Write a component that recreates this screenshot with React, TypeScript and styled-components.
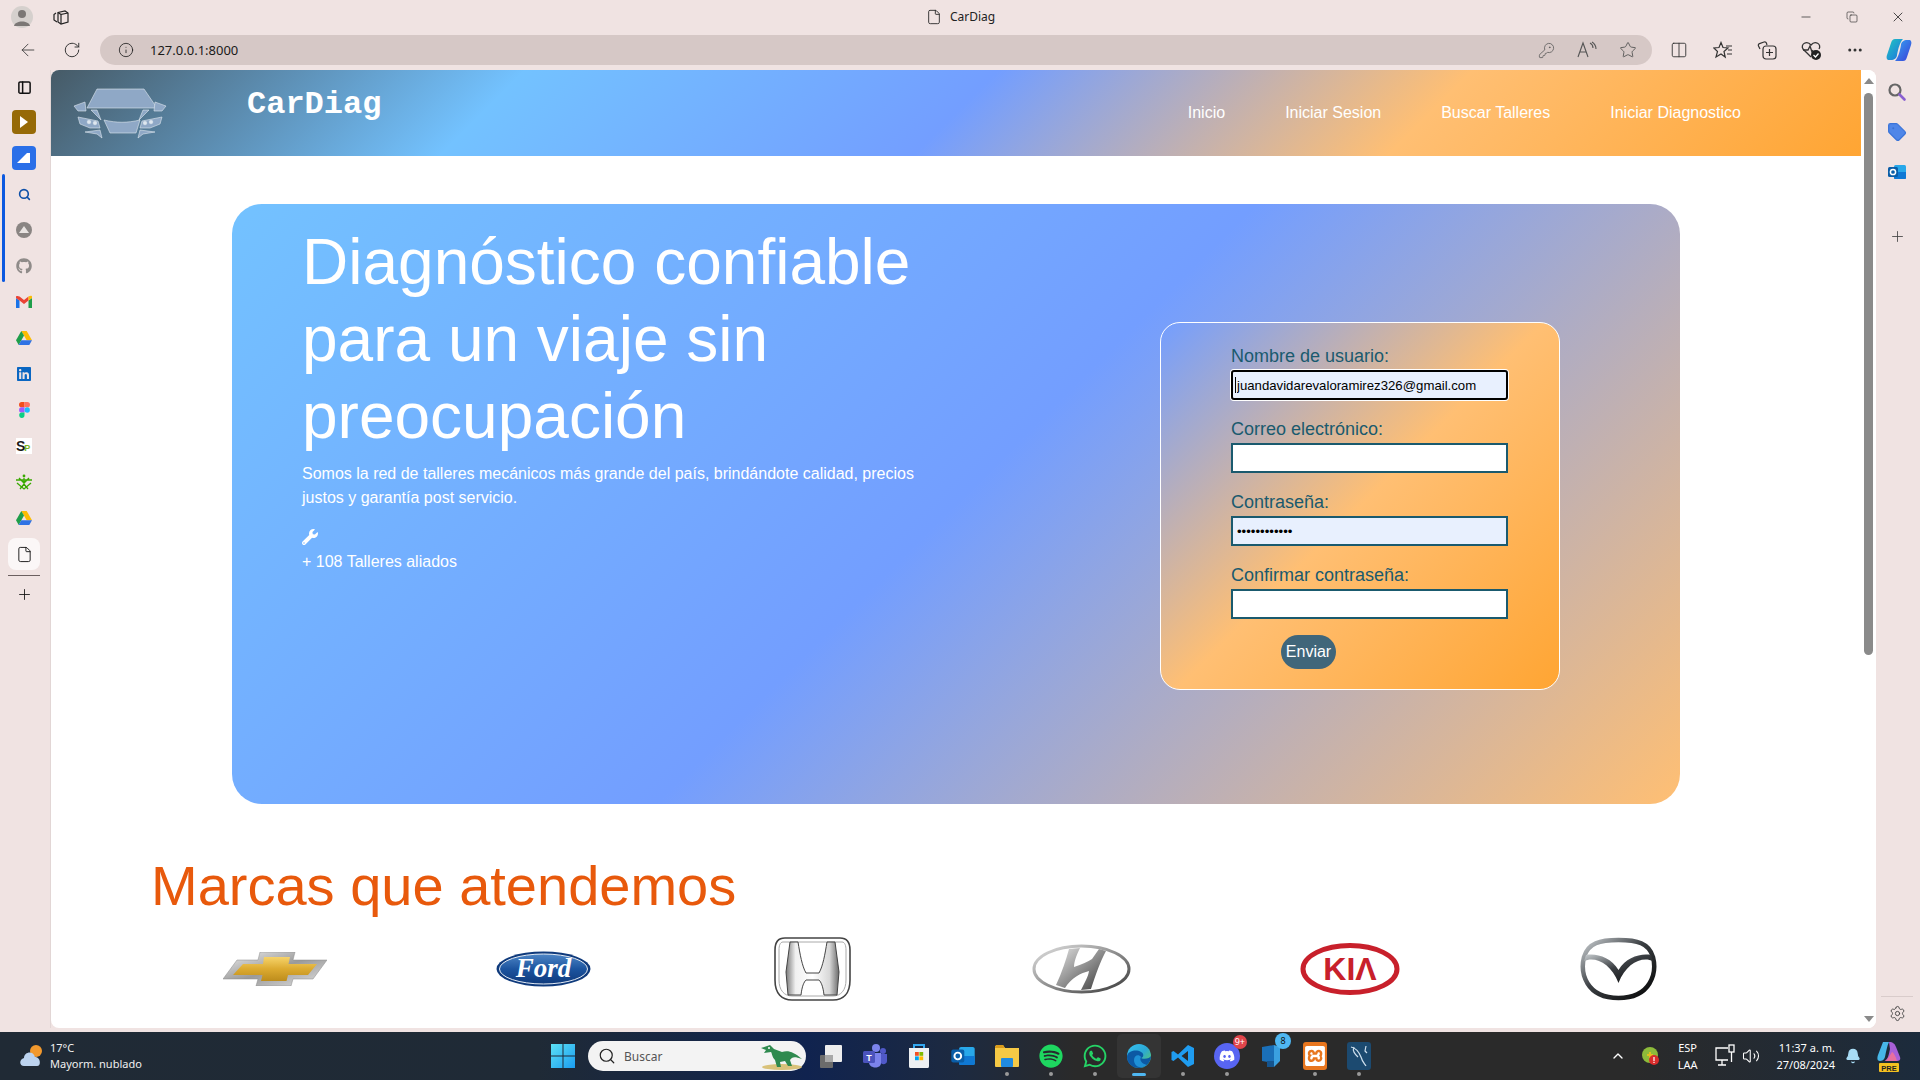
import styled, { createGlobalStyle } from 'styled-components';
import {
  ArrowLeft,
  RotateCw,
  Info,
  KeyRound,
  Star,
  Columns2,
  Copy,
  Minus,
  X,
  Plus,
  Ellipsis,
  Search,
  Settings,
  ChevronUp,
  Bell,
  Volume2,
  File,
  Tag,
  PanelLeft,
} from 'lucide-react';
import { FaWrench, FaGithub, FaSpotify, FaWhatsapp, FaDiscord, FaLinkedin } from 'react-icons/fa';
import { SiXampp } from 'react-icons/si';

const GlobalStyle = createGlobalStyle`
  html, body {
    margin: 0;
    height: 100%;
    overflow: hidden;
    background: #f0e3e2;
    font-family: 'Liberation Sans', Arial, sans-serif;
  }
  * { box-sizing: border-box; }
`;

const Screen = styled.div`
  width: 1920px;
  height: 1080px;
  display: grid;
  grid-template-rows: 33px 37px 962px 48px;
  overflow: hidden;
  background: #f0e3e2;
`;

/* browser chrome */
const TitleBar = styled.div`
  display: grid;
  grid-template-columns: 1fr auto 1fr;
  align-items: center;
  color: #222;
`;

const TitleLeft = styled.div`
  display: flex;
  align-items: center;
  gap: 19px;
  padding-left: 11px;
`;

const Avatar = styled.div`
  width: 22px;
  height: 22px;
  border-radius: 50%;
  background: #d5d0cd;
  display: flex;
  align-items: center;
  justify-content: center;
`;

const TabTitle = styled.div`
  display: flex;
  align-items: center;
  gap: 8px;
  font-family: 'Noto Sans', sans-serif;
  font-size: 12px;
  color: #222;
`;

const WindowButtons = styled.div`
  display: flex;
  justify-content: flex-end;
`;

const WindowButton = styled.div`
  width: 46px;
  height: 32px;
  display: flex;
  align-items: center;
  justify-content: center;
`;

const AddressRow = styled.div`
  display: flex;
  align-items: center;
  padding: 0 0 3px 10px;
`;

const NavIcon = styled.div`
  width: 36px;
  height: 32px;
  margin-right: 8px;
  display: flex;
  align-items: center;
  justify-content: center;
  color: #333;
`;

const AddressPill = styled.div`
  width: 1552px;
  height: 30px;
  margin-left: 2px;
  border-radius: 15px;
  background: #d6c8c6;
  display: flex;
  align-items: center;
  padding-left: 18px;
  gap: 16px;
  font-size: 13px;
  font-family: 'Noto Sans', sans-serif;
  color: #1a1a1a;
`;

const PillActions = styled.div`
  margin-left: auto;
  padding-right: 15px;
  display: flex;
  align-items: center;
  gap: 22px;
  color: #555;
`;

const Toolbar = styled.div`
  display: flex;
  align-items: center;
  margin-left: 5px;
`;

const ToolButton = styled.div`
  width: 44px;
  display: flex;
  align-items: center;
  justify-content: center;
  color: #333;
`;

const Middle = styled.div`
  display: grid;
  grid-template-columns: 51px 1825px 44px;
  padding-bottom: 4px;
  min-height: 0;
`;

const LeftRail = styled.div`
  display: flex;
  flex-direction: column;
  align-items: center;
  padding-right: 2px;
  border-right: 1px solid #e2d6d5;
`;

const RailSlot = styled.div<{ $h?: number; $selected?: boolean }>`
  width: ${(p) => (p.$selected ? '32px' : '48px')};
  height: ${(p) => (p.$selected ? '32px' : `${p.$h ?? 36}px`)};
  margin: ${(p) => (p.$selected ? '2px 0' : '0')};
  border-radius: 8px;
  background: ${(p) => (p.$selected ? '#fbf7f7' : 'transparent')};
  display: flex;
  align-items: center;
  justify-content: center;
  color: #111;
`;

const RailGroup = styled.div`
  position: relative;
  &::before {
    content: '';
    position: absolute;
    left: 2px;
    top: -2px;
    width: 3px;
    height: 108px;
    border-radius: 2px;
    background: #0c59e0;
  }
`;

const RailDivider = styled.div`
  width: 32px;
  height: 1px;
  margin: 3px 0;
  background: #6b5f5f;
`;

const AppTile = styled.div<{ $bg: string }>`
  width: 24px;
  height: 24px;
  border-radius: 4px;
  background: ${(p) => p.$bg};
  display: flex;
  align-items: center;
  justify-content: center;
`;

const SpBadge = styled.div`
  width: 16px;
  height: 16px;
  background: #fff;
  font-family: 'Liberation Sans', sans-serif;
  font-weight: 700;
  font-size: 14px;
  line-height: 16px;
  color: #1c1c1c;
  white-space: nowrap;
  letter-spacing: -1px;
  span {
    font-size: 9px;
    color: #7ab51d;
  }
`;

const Viewport = styled.div`
  display: flex;
  background: #fff;
  border-radius: 8px;
  overflow: hidden;
  min-height: 0;
`;

const Page = styled.div`
  width: 1810px;
  overflow: hidden;
`;

const Scrollbar = styled.div`
  width: 15px;
  position: relative;
  display: flex;
  flex-direction: column;
  align-items: center;
  padding-top: 8px;
  background: #fff;
`;

const ScrollArrow = styled.div<{ $down?: boolean }>`
  width: 0;
  height: 0;
  border-left: 5px solid transparent;
  border-right: 5px solid transparent;
  ${(p) => (p.$down ? 'border-top: 6px solid #8a8a8a; margin-top: auto; margin-bottom: 6px;' : 'border-bottom: 6px solid #8a8a8a;')}
`;

const ScrollThumb = styled.div`
  width: 9px;
  height: 562px;
  margin-top: 9px;
  border-radius: 5px;
  background: #8a8a8a;
`;

const RightRail = styled.div`
  display: flex;
  flex-direction: column;
  align-items: center;
  padding: 2px 2px 0 0;
  color: #444;
`;

const RightSlot = styled.div<{ $gap?: number }>`
  height: 40px;
  margin-top: ${(p) => p.$gap ?? 0}px;
  display: flex;
  align-items: center;
  justify-content: center;
`;

const RailFoot = styled.div`
  margin-top: auto;
  width: 32px;
  border-top: 1px solid #d9cccb;
  display: flex;
  justify-content: center;
  padding: 8px 0 6px;
`;

/* page header */
const Header = styled.header`
  height: 86px;
  display: flex;
  align-items: center;
  padding: 0 120px 0 21px;
  background: linear-gradient(135deg, #465a66 0%, #73c2ff 25%, #739eff 50%, #ffbf73 75%, #ffa533 100%);
`;

const Brand = styled.div`
  margin: 0 0 18px 79px;
  font-family: 'Liberation Mono', 'Courier New', monospace;
  font-weight: 700;
  font-size: 32px;
  color: #fff;
`;

const Nav = styled.nav`
  margin-left: auto;
  display: flex;
  gap: 60px;
`;

const NavLink = styled.a`
  font-size: 16px;
  color: #fff;
`;

/* hero */
const Hero = styled.section`
  width: 1448px;
  height: 600px;
  margin: 48px 0 0 181px;
  padding: 20px 120px 0 70px;
  border-radius: 30px;
  display: flex;
  justify-content: space-between;
  align-items: flex-start;
  color: #fff;
  background: linear-gradient(135deg, #73c2ff 0%, #739eff 50%, #ffbf73 100%);
`;

const HeroText = styled.div`
  width: 640px;
`;

const HeroTitle = styled.h1`
  margin: 0;
  font-weight: 400;
  font-size: 64px;
  line-height: 77px;
`;

const HeroCopy = styled.p`
  margin: 7px 0 0;
  font-size: 16px;
  line-height: 24px;
`;

const Stat = styled.div`
  margin-top: 19px;
  display: flex;
  flex-direction: column;
  gap: 5px;
  font-size: 16px;
  line-height: 24px;
`;

const FormCard = styled.form`
  width: 400px;
  height: 368px;
  margin-top: 98px;
  padding: 23px 0 0 70px;
  border: 1px solid #fff;
  border-radius: 20px;
  display: flex;
  flex-direction: column;
  gap: 19px;
  background: linear-gradient(135deg, #739eff 0%, #ffbf73 50%, #ffa533 100%);
`;

const Field = styled.div`
  position: relative;
  display: flex;
  flex-direction: column;
  gap: 3px;
`;

const FieldLabel = styled.label`
  height: 21px;
  font-size: 18px;
  line-height: 21px;
  color: #1a5a6e;
`;

const TextInput = styled.input<{ $filled?: boolean; $focused?: boolean }>`
  width: 277px;
  height: 30px;
  padding: 1px 4px;
  font-family: 'Liberation Sans', Arial, sans-serif;
  font-size: 13.2px;
  color: #000;
  background: ${(p) => (p.$filled ? '#e8f0fe' : '#fff')};
  border: 2px solid #1a5a6e;
  border-radius: 0;
  outline: none;
  ${(p) => p.$focused && 'border-color: #000; border-radius: 3px; box-shadow: 0 0 0 1px #fff;'}
`;

const Caret = styled.span`
  position: absolute;
  left: 4px;
  bottom: 7px;
  width: 1px;
  height: 16px;
  background: #000;
`;

const SendButton = styled.button`
  width: 55px;
  height: 34px;
  margin: -3px 0 0 50px;
  padding: 0;
  border: none;
  border-radius: 17px;
  background: #40667a;
  color: #fff;
  font-family: 'Liberation Sans', Arial, sans-serif;
  font-size: 16px;
`;

/* brands */
const BrandsTitle = styled.h2`
  margin: 50px 0 0 100px;
  font-weight: 400;
  font-size: 56px;
  line-height: 64px;
  color: #e8590c;
`;

const LogoRow = styled.div`
  display: grid;
  grid-template-columns: repeat(6, 268.6px);
  margin: 1px 0 0 90px;
  height: 100px;
`;

const LogoCell = styled.div`
  display: flex;
  align-items: center;
  justify-content: center;
`;

/* taskbar */
const Taskbar = styled.div`
  display: grid;
  grid-template-columns: 545px auto 1fr;
  align-items: center;
  color: #fff;
  font-family: 'Noto Sans', sans-serif;
  background: linear-gradient(90deg, #202a35 0%, #1f2a36 28%, #10234f 42%, #1d2a40 50%, #2a2a2a 56%, #2a2a2a 85%, #1c2b3c 100%);
`;

const Weather = styled.div`
  display: flex;
  align-items: center;
  gap: 4px;
  padding-left: 18px;
`;

const WeatherText = styled.div`
  font-size: 11px;
  line-height: 16px;
  color: #f0f0f0;
`;

const TaskApps = styled.div`
  display: flex;
  align-items: center;
`;

const StartButton = styled.div`
  width: 40px;
  padding-right: 4px;
  display: flex;
  justify-content: center;
`;

const SearchPill = styled.div`
  width: 218px;
  height: 30px;
  margin: 0 3px 0 3px;
  padding: 0 2px 0 10px;
  border-radius: 15px;
  background: #f3f3f3;
  display: flex;
  align-items: center;
  gap: 8px;
  font-size: 12px;
  color: #555;
`;

const Dino = styled.svg`
  margin-left: auto;
`;

const AppSlot = styled.div<{ $open?: boolean; $active?: boolean }>`
  position: relative;
  width: 44px;
  height: 44px;
  border-radius: 5px;
  display: flex;
  align-items: center;
  justify-content: center;
  background: ${(p) => (p.$active ? '#343434' : 'transparent')};
  &::after {
    content: '';
    display: ${(p) => (p.$open || p.$active ? 'block' : 'none')};
    position: absolute;
    left: 50%;
    bottom: 2px;
    width: ${(p) => (p.$active ? '14px' : '4px')};
    height: ${(p) => (p.$active ? '3px' : '4px')};
    border-radius: 2px;
    transform: translateX(-50%);
    background: ${(p) => (p.$active ? '#4fb7f2' : '#9a9a9a')};
  }
`;

const Badge = styled.span<{ $bg: string; $big?: boolean }>`
  position: absolute;
  top: ${(p) => (p.$big ? '-1px' : '1px')};
  right: 2px;
  min-width: ${(p) => (p.$big ? '16px' : '14px')};
  height: ${(p) => (p.$big ? '16px' : '14px')};
  padding: 0 2px;
  border-radius: 8px;
  background: ${(p) => p.$bg};
  color: ${(p) => (p.$big ? '#111' : '#fff')};
  font-size: 9px;
  line-height: ${(p) => (p.$big ? '16px' : '14px')};
  text-align: center;
`;

const Tray = styled.div`
  display: flex;
  align-items: center;
  justify-content: flex-end;
  padding-right: 19px;
`;

const TrayText = styled.div<{ $right?: boolean }>`
  font-size: 11px;
  line-height: 17px;
  text-align: ${(p) => (p.$right ? 'right' : 'center')};
  white-space: nowrap;
`;

const TrayGap = styled.div<{ $w: number }>`
  margin-left: ${(p) => p.$w}px;
  display: flex;
  align-items: center;
`;

/* drawings */
const CarLogo = () => (
  <svg width="96" height="52" viewBox="0 0 96 52" fill="#8fa8c6" stroke="#dfe7ef" strokeWidth="0.6">
    <path d="M25 2 L72 2 L85 21 L15 21 Z" />
    <path d="M2 19 L13 15 L14 24 L6 24 Z" />
    <path d="M94 19 L83 15 L82 24 L90 24 Z" />
    <path d="M19 23 L25 23 L29 33 Z" />
    <path d="M77 23 L71 23 L67 33 Z" />
    <path d="M6 30 L26 34 L28 41 L18 41 L8 37 Z" />
    <path d="M90 30 L70 34 L68 41 L78 41 L88 37 Z" />
    <path d="M32 33 C45 36 55 36 68 33 L64 46 L38 46 Z" />
    <path d="M13 45 L28 43 L30 51 L25 47 Z" />
    <path d="M83 45 L68 43 L66 51 L71 47 Z" />
    <circle cx="17" cy="35" r="1.8" fill="#dfe7ef" />
    <circle cx="23" cy="36" r="1.8" fill="#dfe7ef" />
    <circle cx="79" cy="35" r="1.8" fill="#dfe7ef" />
    <circle cx="73" cy="36" r="1.8" fill="#dfe7ef" />
  </svg>
);

const WorkspaceIcon = () => (
  <svg width="18" height="18" viewBox="0 0 18 18" fill="none" stroke="#222" strokeWidth="1.2">
    <path d="M6 4.5 L13 3 L16 5 V14 L9 16 L6 14 Z" />
    <path d="M4 5 L2 6.5 V12 L5 14" />
    <path d="M9 16 V6.5 L16 5 M9 6.5 L6 4.5" />
  </svg>
);

const FavoritesIcon = () => (
  <svg width="20" height="18" viewBox="0 0 20 18" fill="none" stroke="#333" strokeWidth="1.2">
    <path d="M8 1.5 L10 6.5 L15 7 L11 10.5 L12.2 16 L8 13 L3 16 L4.5 10.5 L0.8 7 L6 6.5 Z" />
    <path d="M13 5 H19 M15 9 H19 M14 13 H19" />
  </svg>
);

const CollectionsIcon = () => (
  <svg width="20" height="20" viewBox="0 0 20 20" fill="none" stroke="#333" strokeWidth="1.2">
    <path d="M3 9 L1.5 6 C1 5 1.5 4 2.5 3.6 L7 2 C8 1.7 9 2 9.4 3 L10 5" />
    <rect x="6" y="6" width="13" height="13" rx="3" />
    <path d="M12.5 9 V16 M9 12.5 H16" />
  </svg>
);

const HealthIcon = () => (
  <svg width="22" height="22" viewBox="0 0 22 22" fill="none" stroke="#333" strokeWidth="1.3">
    <path d="M11 18 L3 10 C0 5 7 1 11 6 C15 1 22 5 19 10" />
    <path d="M3 11 H8 L10 7 L12 13 L13 11" />
    <circle cx="16" cy="16" r="5" fill="#222" stroke="none" />
    <path d="M13.5 16 L15.5 18 L18.5 14.5" stroke="#fff" />
  </svg>
);

const CopilotIcon = ({ size = 26 }: { size?: number }) => (
  <svg width={size} height={size} viewBox="0 0 26 26">
    <defs>
      <linearGradient id="cpA" x1="0" y1="0" x2="1" y2="1">
        <stop offset="0" stopColor="#1fc8c0" />
        <stop offset="1" stopColor="#1f6fe0" />
      </linearGradient>
      <linearGradient id="cpB" x1="0" y1="0" x2="1" y2="1">
        <stop offset="0" stopColor="#35a6f2" />
        <stop offset="1" stopColor="#3a3ed8" />
      </linearGradient>
    </defs>
    <path d="M9 2 H17 C14 5 12 12 11 18 C11 21 8 23 5 23 H3 C1 23 0 21 1 18 L5 6 C6 3 7 2 9 2 Z" fill="url(#cpA)" />
    <path d="M17 24 H9 C12 21 14 14 15 8 C15 5 18 3 21 3 H23 C25 3 26 5 25 8 L21 20 C20 23 19 24 17 24 Z" fill="url(#cpB)" />
  </svg>
);

const GmailIcon = () => (
  <svg width="16" height="14" viewBox="0 0 16 14">
    <path d="M0 3 V13 H3.5 V5.5 Z" fill="#1a73e8" />
    <path d="M12.5 5.5 V13 H16 V3 Z" fill="#1e9e4a" />
    <path d="M0 1.5 V3 L3.5 5.5 L8 9 L12.5 5.5 V1.5 L8 5 L3.5 1.5 C2 0.5 0 1 0 1.5 Z" fill="#ea4335" />
    <path d="M12.5 1.5 V5.5 L16 3 V1.5 C16 0.5 14 0.5 12.5 1.5 Z" fill="#fbbc04" />
  </svg>
);

const DriveIcon = () => (
  <svg width="16" height="14" viewBox="0 0 16 14">
    <path d="M5.3 0 H10.7 L16 9.2 H10.7 Z" fill="#fbbc04" />
    <path d="M5.3 0 L0 9.2 L2.7 14 L8 4.6 Z" fill="#1e9e4a" />
    <path d="M5.3 9.2 H16 L13.3 14 H2.7 Z" fill="#2f72e4" />
  </svg>
);

const FigmaIcon = () => (
  <svg width="11" height="16" viewBox="0 0 11 16">
    <path d="M2.7 0 H5.5 V5.3 H2.7 A2.65 2.65 0 0 1 2.7 0 Z" fill="#f24e1e" />
    <path d="M5.5 0 H8.3 A2.65 2.65 0 0 1 8.3 5.3 H5.5 Z" fill="#ff7262" />
    <path d="M2.7 5.3 H5.5 V10.6 H2.7 A2.65 2.65 0 0 1 2.7 5.3 Z" fill="#a259ff" />
    <circle cx="8.2" cy="8" r="2.65" fill="#1abcfe" />
    <path d="M2.7 10.6 H5.5 V13.3 A2.65 2.65 0 1 1 2.7 10.6 Z" fill="#0acf83" />
  </svg>
);

const SenaIcon = () => (
  <svg width="16" height="16" viewBox="0 0 16 16" fill="none" stroke="#39a900" strokeWidth="1.3">
    <circle cx="8" cy="2" r="1.4" fill="#39a900" stroke="none" />
    <path d="M0 6 H16 M8 4 V9 M1 9 L8 15 L15 9 M4 15 L8 10 L12 15 M3 4 L8 9 L13 4" />
  </svg>
);

const EdgeSearchIcon = () => (
  <svg width="20" height="20" viewBox="0 0 20 20" fill="none">
    <circle cx="8" cy="8" r="5.5" stroke="#666" strokeWidth="2.2" />
    <path d="M12.5 12.5 L17.5 17.5" stroke="#8a5fd0" strokeWidth="2.6" strokeLinecap="round" />
  </svg>
);

const MsTagIcon = () => <Tag size={20} color="#3a74d9" fill="#4f86e8" strokeWidth={1.5} />;

const OutlookIcon = ({ size = 20 }: { size?: number }) => (
  <svg width={size} height={size} viewBox="0 0 20 20">
    <rect x="7" y="3" width="12" height="14" rx="1.5" fill="#28a8ea" />
    <path d="M7 10 L19 10 V16 C19 17 18 17 17 17 H8 C7 17 7 16 7 16 Z" fill="#0f78d4" />
    <rect x="1" y="5" width="10" height="10" rx="1.5" fill="#0a5ea8" />
    <circle cx="6" cy="10" r="2.6" fill="none" stroke="#fff" strokeWidth="1.5" />
  </svg>
);

const WeatherIcon = () => (
  <svg width="28" height="28" viewBox="0 0 28 28">
    <circle cx="18" cy="9" r="6" fill="#f2992e" />
    <path d="M6 24 C1 24 1 17 6 16 C6 10 15 8 17 15 C22 14 24 24 19 24 Z" fill="#bcd3ef" />
  </svg>
);

const WindowsLogo = () => (
  <svg width="24" height="24" viewBox="0 0 24 24">
    <defs>
      <linearGradient id="winG" x1="0" y1="0" x2="1" y2="1">
        <stop offset="0" stopColor="#5ce1f5" />
        <stop offset="1" stopColor="#1a9cf0" />
      </linearGradient>
    </defs>
    <path d="M0 0 H11.5 V11.5 H0 Z M12.5 0 H24 V11.5 H12.5 Z M0 12.5 H11.5 V24 H0 Z M12.5 12.5 H24 V24 H12.5 Z" fill="url(#winG)" />
  </svg>
);

const TaskViewIcon = () => (
  <svg width="24" height="24" viewBox="0 0 24 24">
    <rect x="1" y="11" width="13" height="13" rx="1" fill="#6b6b6b" />
    <rect x="6" y="1" width="17" height="17" rx="1" fill="#ededed" />
    <rect x="6" y="11" width="8" height="7" fill="#a8a8a8" />
  </svg>
);

const TeamsIcon = () => (
  <svg width="26" height="26" viewBox="0 0 26 26">
    <circle cx="14" cy="5" r="4" fill="#7b83eb" />
    <circle cx="21" cy="8" r="3" fill="#5059c9" />
    <path d="M17 11 H25 V18 C25 22 19 22 18 19 Z" fill="#5059c9" />
    <path d="M7 10 H19 V20 C19 26 8 26 7 20 Z" fill="#7b83eb" />
    <rect x="1" y="8" width="12" height="12" rx="1.5" fill="#4b53bc" />
    <text x="7" y="17.5" fontSize="9" fontWeight="700" fill="#fff" textAnchor="middle" fontFamily="Liberation Sans">T</text>
  </svg>
);

const StoreIcon = () => (
  <svg width="24" height="26" viewBox="0 0 24 26">
    <path d="M7 5 V2 H17 V5" fill="none" stroke="#33a8f0" strokeWidth="2" />
    <path d="M2 5 H22 V23 C22 25 21 25 20 25 H4 C3 25 2 25 2 23 Z" fill="#eef0f2" />
    <rect x="8" y="9" width="3.8" height="3.8" fill="#f25022" />
    <rect x="12.4" y="9" width="3.8" height="3.8" fill="#7fba00" />
    <rect x="8" y="13.4" width="3.8" height="3.8" fill="#00a4ef" />
    <rect x="12.4" y="13.4" width="3.8" height="3.8" fill="#ffb900" />
  </svg>
);

const ExplorerIcon = () => (
  <svg width="26" height="24" viewBox="0 0 26 24">
    <path d="M1 3 C1 2 2 1 3 1 H9 L11 4 H25 V22 C25 23 24 23 23 23 H3 C2 23 1 23 1 22 Z" fill="#f6c945" />
    <path d="M1 3 C1 2 2 1 3 1 H9 L11 4 H1 Z" fill="#d99b1c" />
    <rect x="7" y="14" width="12" height="9" rx="1" fill="#1f8ae0" />
  </svg>
);

const EdgeIcon = () => (
  <svg width="26" height="26" viewBox="0 0 26 26">
    <defs>
      <linearGradient id="edgeG" x1="0" y1="0" x2="1" y2="1">
        <stop offset="0" stopColor="#35c1f1" />
        <stop offset="0.5" stopColor="#2ba8d4" />
        <stop offset="1" stopColor="#66d24f" />
      </linearGradient>
    </defs>
    <circle cx="13" cy="13" r="12" fill="url(#edgeG)" />
    <path d="M1 14 C1 8 10 6 15 9 C19 11 17 15 15 15 C19 17 24 15 25 13 C25 21 18 25 13 25 C6 25 1 20 1 14 Z" fill="#0c59a4" />
    <path d="M8 17 C8 12 13 11 15 14 C13 17 16 21 21 22 C14 27 8 23 8 17 Z" fill="#1e90d6" />
  </svg>
);

const VsCodeIcon = () => (
  <svg width="24" height="24" viewBox="0 0 24 24">
    <path d="M17 1 L23 4 V20 L17 23 L7 13.5 L2.5 17 L0.5 16 V8 L2.5 7 L7 10.5 Z M17 7 L10.5 12 L17 17 Z" fill="#1f9cf0" />
  </svg>
);

const WordLikeIcon = () => (
  <svg width="26" height="26" viewBox="0 0 26 26">
    <path d="M4 4 L16 2 V20 L4 18 Z" fill="#1a6fb8" />
    <path d="M16 2 L22 4 V18 L16 24 Z" fill="#3aa0e0" />
    <rect x="9" y="18" width="7" height="6" fill="#15548e" />
  </svg>
);

const WorkbenchIcon = () => (
  <svg width="24" height="28" viewBox="0 0 24 28" fill="none" stroke="#cfe0ee" strokeWidth="1.2">
    <rect width="24" height="28" rx="3" fill="#1c4a70" stroke="none" />
    <path d="M4 5 C9 6 12 10 14 15 C15 19 17 21 19 24" />
    <path d="M7 5 C5 9 8 12 11 15" />
    <path d="M19 4 L18 9 L20 11" />
  </svg>
);

const NetworkIcon = () => (
  <svg width="22" height="24" viewBox="0 0 22 24" fill="none" stroke="#fff" strokeWidth="1.3">
    <path d="M14 4 H2 V16 H14" />
    <path d="M8 16 V21 M4 21 H12" />
    <rect x="15" y="1" width="5" height="7" />
    <path d="M17.5 8 V18" />
  </svg>
);

const Tile = styled.div<{ $bg: string; $round?: boolean }>`
  width: 24px;
  height: 28px;
  border-radius: ${(p) => (p.$round ? '50%' : '3px')};
  background: ${(p) => p.$bg};
  display: flex;
  align-items: center;
  justify-content: center;
  color: #fff;
`;

const RoundTile = styled(Tile)`
  width: 26px;
  height: 26px;
`;

const DinoIcon = () => (
  <Dino width="46" height="28" viewBox="0 0 46 28">
    <ellipse cx="24" cy="25" rx="20" ry="3" fill="#d9c27a" />
    <path d="M3 6 L12 3 L16 7 L24 10 C30 8 36 10 44 17 C36 14 34 15 32 18 L34 24 H30 L27 19 L22 20 L23 25 H19 L17 18 C14 15 14 11 13 10 L6 11 L8 8 Z" fill="#2f8a4f" />
    <circle cx="11" cy="6" r="1" fill="#fff" />
  </Dino>
);

const TrayAppIcon = () => (
  <svg width="20" height="20" viewBox="0 0 20 20">
    <circle cx="10" cy="9" r="8" fill="#8dbb3a" />
    <path d="M7 9 H13 M10 6 V12" stroke="#e0c020" strokeWidth="2" />
    <circle cx="14" cy="14" r="5" fill="#d92c2c" />
    <rect x="13.4" y="11" width="1.2" height="4" fill="#fff" />
    <rect x="13.4" y="15.8" width="1.2" height="1.2" fill="#fff" />
  </svg>
);

const CopilotPreIcon = () => (
  <svg width="26" height="32" viewBox="0 0 26 32">
    <path d="M7 2 H13 C11 6 10 12 9 17 C8 20 6 21 4 21 C1 21 1 18 2 15 Z" fill="#47b7e8" />
    <path d="M13 2 C17 2 19 4 20 7 L24 17 C25 20 23 21 21 21 H9 C12 19 13 14 14 9 Z" fill="#a860d8" />
    <path d="M9 21 H21 C20 17 18 13 16 12 C14 15 12 19 9 21 Z" fill="#e86fa0" />
    <rect x="3" y="23" width="20" height="9" rx="1" fill="#f4c020" />
    <text x="13" y="30.5" fontSize="7.5" fontWeight="700" textAnchor="middle" fill="#222" fontFamily="Liberation Sans">PRE</text>
  </svg>
);

const ChevroletLogo = () => (
  <svg width="104" height="34" viewBox="0 0 104 34">
    <defs>
      <linearGradient id="chevS" x1="0" y1="0" x2="1" y2="1">
        <stop offset="0" stopColor="#f2f2f2" />
        <stop offset="0.5" stopColor="#9a9a9a" />
        <stop offset="1" stopColor="#e4e4e4" />
      </linearGradient>
      <linearGradient id="chevG" x1="0" y1="0" x2="0" y2="1">
        <stop offset="0" stopColor="#f6d36a" />
        <stop offset="0.5" stopColor="#dcaa30" />
        <stop offset="1" stopColor="#bd8c1c" />
      </linearGradient>
    </defs>
    <path d="M14 8 H35 L37 0 H72 L70 8 H104 L90 27 H70 L68 34 H33 L35 27 H0 Z" fill="url(#chevS)" stroke="#8a8a8a" strokeWidth="0.5" />
    <path d="M20 12 H40 L41 5 H67 L65.5 12 H94 L85 23 H65 L63.5 29 H38 L39.5 23 H10 Z" fill="url(#chevG)" />
  </svg>
);

const FordLogo = () => (
  <svg width="95" height="36" viewBox="0 0 95 36">
    <defs>
      <linearGradient id="fordB" x1="0" y1="0" x2="0" y2="1">
        <stop offset="0" stopColor="#4e86c6" />
        <stop offset="0.5" stopColor="#1c549f" />
        <stop offset="1" stopColor="#0f3a7c" />
      </linearGradient>
    </defs>
    <ellipse cx="47.5" cy="18" rx="47" ry="17.5" fill="#0f3a7c" />
    <ellipse cx="47.5" cy="18" rx="44" ry="15" fill="url(#fordB)" stroke="#e7eef6" strokeWidth="1" />
    <text x="47.5" y="26" textAnchor="middle" fontFamily="Liberation Serif" fontStyle="italic" fontWeight="700" fontSize="27" fill="#fff">Ford</text>
  </svg>
);

const HondaLogo = () => (
  <svg width="79" height="66" viewBox="0 0 79 66">
    <defs>
      <linearGradient id="hondaS" x1="0" y1="0" x2="1" y2="0">
        <stop offset="0" stopColor="#7a7a7a" />
        <stop offset="0.18" stopColor="#f0f0f0" />
        <stop offset="0.5" stopColor="#ffffff" />
        <stop offset="0.82" stopColor="#d8d8d8" />
        <stop offset="1" stopColor="#6a6a6a" />
      </linearGradient>
    </defs>
    <path d="M12 2 H67 C74 2 77 6 77 14 V44 C77 58 70 64 60 64 H19 C9 64 2 58 2 44 V14 C2 6 5 2 12 2 Z" fill="#fff" stroke="#444" strokeWidth="1.6" />
    <path d="M10 6 H69 C72 6 73 10 73 14 V44 C73 54 68 60 60 60 H19 C11 60 6 54 6 44 V14 C6 10 7 6 10 6 Z" fill="none" stroke="#aaa" strokeWidth="1" />
    <path d="M17 6 H25 C27 18 29 30 33 37 H46 C50 30 52 18 54 6 H62 L66 36 L64 59 H51 C50 50 48 46 46 44 H33 C31 46 29 50 28 59 H15 L13 36 Z" fill="url(#hondaS)" stroke="#444" strokeWidth="1" />
  </svg>
);

const HyundaiLogo = () => (
  <svg width="99" height="50" viewBox="0 0 99 50">
    <defs>
      <linearGradient id="hyuS" x1="0" y1="0" x2="1" y2="1">
        <stop offset="0" stopColor="#e2e2e2" />
        <stop offset="0.5" stopColor="#8f8f8f" />
        <stop offset="1" stopColor="#3a3a3a" />
      </linearGradient>
    </defs>
    <ellipse cx="49.5" cy="25" rx="47.5" ry="23" fill="#fff" stroke="url(#hyuS)" strokeWidth="3" />
    <path d="M37 5 L48 4 C44 12 42 18 42 23 C50 20 56 18 60 15 L67 5 L74 7 C68 18 64 30 59 45 L49 46 C53 38 56 33 57 27 C49 29 39 34 33 44 L24 41 C30 28 34 16 37 5 Z" fill="url(#hyuS)" />
  </svg>
);

const KiaLogo = () => (
  <svg width="100" height="52" viewBox="0 0 100 52">
    <ellipse cx="50" cy="26" rx="47" ry="23.5" fill="#fff" stroke="#c8202b" strokeWidth="5" />
    <text x="50" y="37" textAnchor="middle" fontFamily="Liberation Sans" fontWeight="700" fontSize="32" fill="#c8202b">KIΛ</text>
  </svg>
);

const MazdaLogo = () => (
  <svg width="79" height="64" viewBox="0 0 79 64">
    <defs>
      <linearGradient id="mazS" x1="0" y1="0" x2="1" y2="1">
        <stop offset="0" stopColor="#c8cdd0" />
        <stop offset="0.45" stopColor="#3a3e42" />
        <stop offset="1" stopColor="#050505" />
      </linearGradient>
    </defs>
    <path d="M39.5 3 C58 3 70 6 74 20 C78 36 72 61 39.5 61 C7 61 1 36 5 20 C9 6 21 3 39.5 3 Z" fill="#fff" stroke="url(#mazS)" strokeWidth="4.5" />
    <path d="M5 24 C16 19 32 26 39.5 46 C47 26 63 19 74 24 L72 18 C62 16 47 20 39.5 33 C32 20 17 16 7 18 Z" fill="url(#mazS)" />
  </svg>
);

export default function App() {
  return (
    <Screen>
      <GlobalStyle />
      <TitleBar>
        <TitleLeft>
          <Avatar>
            <svg width="18" height="18" viewBox="0 0 18 18" fill="#7b7775">
              <circle cx="9" cy="6" r="4" />
              <path d="M1 18 C2 12 16 12 17 18 Z" />
            </svg>
          </Avatar>
          <WorkspaceIcon />
        </TitleLeft>
        <TabTitle>
          <File size={16} strokeWidth={1.3} />
          CarDiag
        </TabTitle>
        <WindowButtons>
          <WindowButton><Minus size={14} strokeWidth={1.2} /></WindowButton>
          <WindowButton><Copy size={12} strokeWidth={1.2} /></WindowButton>
          <WindowButton><X size={16} strokeWidth={1.2} /></WindowButton>
        </WindowButtons>
      </TitleBar>

      <AddressRow>
        <NavIcon><ArrowLeft size={20} strokeWidth={1} /></NavIcon>
        <NavIcon><RotateCw size={18} strokeWidth={1.3} /></NavIcon>
        <AddressPill>
          <Info size={16} strokeWidth={1.2} />
          127.0.0.1:8000
          <PillActions>
            <KeyRound size={17} strokeWidth={1.1} />
            <svg width="20" height="18" viewBox="0 0 20 18" fill="none" stroke="#555" strokeWidth="1.1">
              <path d="M1 16 L6 2 L11 16 M3 11 H9" />
              <path d="M13 2 C15 3 16 5 16 7 M15 1 C18 3 19 5 19 8" />
            </svg>
            <Star size={18} strokeWidth={1.2} />
          </PillActions>
        </AddressPill>
        <Toolbar>
          <ToolButton><Columns2 size={18} strokeWidth={1.2} /></ToolButton>
          <ToolButton><FavoritesIcon /></ToolButton>
          <ToolButton><CollectionsIcon /></ToolButton>
          <ToolButton><HealthIcon /></ToolButton>
          <ToolButton><Ellipsis size={18} /></ToolButton>
          <ToolButton><CopilotIcon /></ToolButton>
        </Toolbar>
      </AddressRow>

      <Middle>
        <LeftRail>
          <RailSlot $h={34}><PanelLeft size={15} strokeWidth={2.4} /></RailSlot>
          <RailSlot><AppTile $bg="#966a07"><svg width="10" height="12" viewBox="0 0 10 12" fill="#fff"><path d="M1 0 L9 6 L1 12 Z" /></svg></AppTile></RailSlot>
          <RailSlot><AppTile $bg="#2a6fe8"><svg width="14" height="12" viewBox="0 0 14 12" fill="#fff"><path d="M0 11 L10 1 L13 1 L13 11 Z" /></svg></AppTile></RailSlot>
          <RailGroup>
            <RailSlot><Search size={13} color="#0c4fa8" strokeWidth={3} /></RailSlot>
            <RailSlot>
              <svg width="16" height="16" viewBox="0 0 16 16"><circle cx="8" cy="8" r="8" fill="#8a8583" /><path d="M8 4 L13 11 H3 Z" fill="#e9e4e2" /></svg>
            </RailSlot>
            <RailSlot><FaGithub size={16} color="#8f8b89" /></RailSlot>
          </RailGroup>
          <RailSlot><GmailIcon /></RailSlot>
          <RailSlot><DriveIcon /></RailSlot>
          <RailSlot><FaLinkedin size={16} color="#0a66c2" /></RailSlot>
          <RailSlot><FigmaIcon /></RailSlot>
          <RailSlot><SpBadge>S<span>P</span></SpBadge></RailSlot>
          <RailSlot><SenaIcon /></RailSlot>
          <RailSlot><DriveIcon /></RailSlot>
          <RailSlot $selected><File size={17} strokeWidth={1.3} /></RailSlot>
          <RailDivider />
          <RailSlot $h={30}><Plus size={17} strokeWidth={1.2} /></RailSlot>
        </LeftRail>

        <Viewport>
          <Page>
            <Header>
              <CarLogo />
              <Brand>CarDiag</Brand>
              <Nav>
                <NavLink>Inicio</NavLink>
                <NavLink>Iniciar Sesion</NavLink>
                <NavLink>Buscar Talleres</NavLink>
                <NavLink>Iniciar Diagnostico</NavLink>
              </Nav>
            </Header>

            <Hero>
              <HeroText>
                <HeroTitle>Diagnóstico confiable para un viaje sin preocupación</HeroTitle>
                <HeroCopy>
                  Somos la red de talleres mecánicos más grande del país, brindándote calidad, precios justos y garantía post servicio.
                </HeroCopy>
                <Stat>
                  <FaWrench size={16} />
                  + 108 Talleres aliados
                </Stat>
              </HeroText>
              <FormCard>
                <Field>
                  <FieldLabel>Nombre de usuario:</FieldLabel>
                  <TextInput $filled $focused readOnly value="juandavidarevaloramirez326@gmail.com" />
                  <Caret />
                </Field>
                <Field>
                  <FieldLabel>Correo electrónico:</FieldLabel>
                  <TextInput readOnly />
                </Field>
                <Field>
                  <FieldLabel>Contraseña:</FieldLabel>
                  <TextInput $filled type="password" readOnly value="contrasena12" />
                </Field>
                <Field>
                  <FieldLabel>Confirmar contraseña:</FieldLabel>
                  <TextInput readOnly />
                </Field>
                <SendButton type="button">Enviar</SendButton>
              </FormCard>
            </Hero>

            <BrandsTitle>Marcas que atendemos</BrandsTitle>
            <LogoRow>
              <LogoCell><ChevroletLogo /></LogoCell>
              <LogoCell><FordLogo /></LogoCell>
              <LogoCell><HondaLogo /></LogoCell>
              <LogoCell><HyundaiLogo /></LogoCell>
              <LogoCell><KiaLogo /></LogoCell>
              <LogoCell><MazdaLogo /></LogoCell>
            </LogoRow>
          </Page>
          <Scrollbar>
            <ScrollArrow />
            <ScrollThumb />
            <ScrollArrow $down />
          </Scrollbar>
        </Viewport>

        <RightRail>
          <RightSlot><EdgeSearchIcon /></RightSlot>
          <RightSlot><MsTagIcon /></RightSlot>
          <RightSlot><OutlookIcon /></RightSlot>
          <RightSlot $gap={24}><Plus size={17} strokeWidth={1.2} /></RightSlot>
          <RailFoot><Settings size={17} strokeWidth={1.3} /></RailFoot>
        </RightRail>
      </Middle>

      <Taskbar>
        <Weather>
          <WeatherIcon />
          <WeatherText>
            17°C
            <br />
            Mayorm. nublado
          </WeatherText>
        </Weather>
        <TaskApps>
          <StartButton><WindowsLogo /></StartButton>
          <SearchPill>
            <Search size={18} color="#222" strokeWidth={1.6} />
            Buscar
            <DinoIcon />
          </SearchPill>
          <AppSlot><TaskViewIcon /></AppSlot>
          <AppSlot><TeamsIcon /></AppSlot>
          <AppSlot><StoreIcon /></AppSlot>
          <AppSlot><OutlookIcon size={26} /></AppSlot>
          <AppSlot $open><ExplorerIcon /></AppSlot>
          <AppSlot $open><FaSpotify size={24} color="#1ed760" /></AppSlot>
          <AppSlot $open><FaWhatsapp size={26} color="#25d366" /></AppSlot>
          <AppSlot $active><EdgeIcon /></AppSlot>
          <AppSlot $open><VsCodeIcon /></AppSlot>
          <AppSlot $open>
            <RoundTile $bg="#5865f2" $round><FaDiscord size={16} /></RoundTile>
            <Badge $bg="#e0454b">9+</Badge>
          </AppSlot>
          <AppSlot>
            <WordLikeIcon />
            <Badge $bg="#4fb7f2" $big>8</Badge>
          </AppSlot>
          <AppSlot $open><Tile $bg="#e8761e"><SiXampp size={20} /></Tile></AppSlot>
          <AppSlot $open><WorkbenchIcon /></AppSlot>
        </TaskApps>
        <Tray>
          <ChevronUp size={16} strokeWidth={2} />
          <TrayGap $w={14}><TrayAppIcon /></TrayGap>
          <TrayGap $w={18}><TrayText>ESP<br />LAA</TrayText></TrayGap>
          <TrayGap $w={17}><NetworkIcon /></TrayGap>
          <TrayGap $w={6}><Volume2 size={18} strokeWidth={1.4} /></TrayGap>
          <TrayGap $w={16}><TrayText $right>11:37 a. m.<br />27/08/2024</TrayText></TrayGap>
          <TrayGap $w={10}><Bell size={16} color="#a8dcf5" fill="#a8dcf5" /></TrayGap>
          <TrayGap $w={15}><CopilotPreIcon /></TrayGap>
        </Tray>
      </Taskbar>
    </Screen>
  );
}
